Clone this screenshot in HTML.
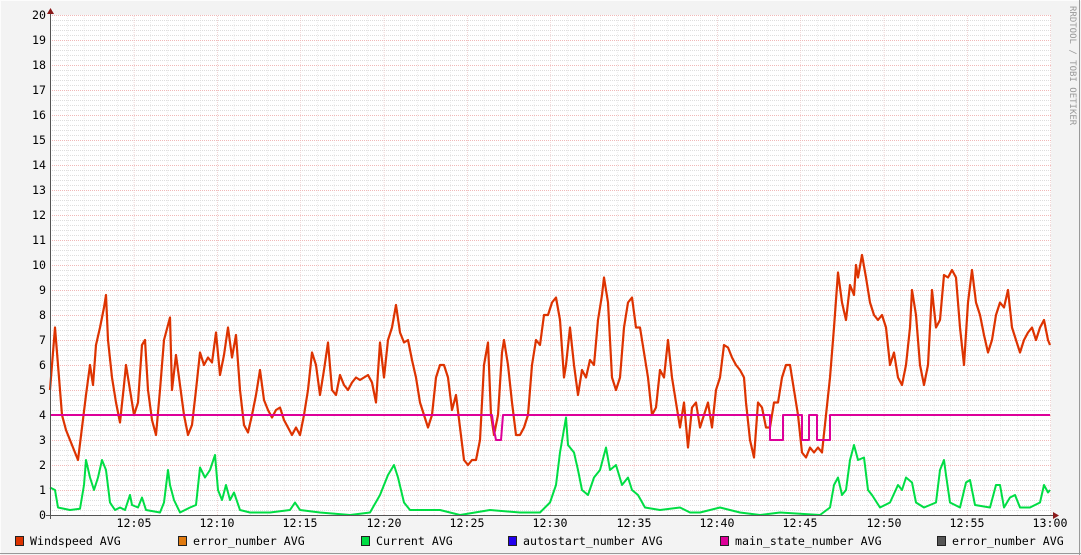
<!DOCTYPE html>
<html><head><meta charset="utf-8"><style>
html,body{margin:0;padding:0;background:#f3f3f3;}
svg{display:block;}
text{font-family:"DejaVu Sans Mono","Liberation Mono",monospace;font-size:11.6px;fill:#000;}
</style></head><body>
<svg width="1081" height="555" viewBox="0 0 1081 555" xmlns="http://www.w3.org/2000/svg">
<defs>
<pattern id="hmin" x="0" y="15" width="1000" height="5" patternUnits="userSpaceOnUse"><line x1="0" y1="0.5" x2="1000" y2="0.5" stroke="#ddd" stroke-width="1" stroke-dasharray="1,1"/></pattern>
<pattern id="vmin" x="50.5" y="0" width="16.6667" height="600" patternUnits="userSpaceOnUse"><line x1="0" y1="0" x2="0" y2="600" stroke="#ddd" stroke-width="1" stroke-dasharray="1,1"/></pattern>
<pattern id="hmaj" x="0" y="15" width="1000" height="25" patternUnits="userSpaceOnUse"><line x1="0" y1="0.5" x2="1000" y2="0.5" stroke="#f0b8b8" stroke-width="1" stroke-dasharray="1,1"/></pattern>
<pattern id="vmaj" x="50.5" y="0" width="83.333" height="600" patternUnits="userSpaceOnUse"><line x1="0" y1="0" x2="0" y2="600" stroke="#f0b8b8" stroke-width="1" stroke-dasharray="1,1"/></pattern>
</defs>
<rect x="0" y="0" width="1081" height="555" fill="#f3f3f3"/>
<line x1="0" y1="0.5" x2="1081" y2="0.5" stroke="#fcfcfc"/>
<line x1="0.5" y1="0" x2="0.5" y2="555" stroke="#fcfcfc"/>
<line x1="0" y1="553.5" x2="1081" y2="553.5" stroke="#999"/>
<line x1="1079.5" y1="0" x2="1079.5" y2="555" stroke="#999"/>
<rect x="50" y="15" width="1001" height="500" fill="#fff"/>
<rect x="51" y="15" width="1000" height="500" fill="url(#hmin)"/>
<rect x="51" y="15" width="1000" height="500" fill="url(#vmin)"/>
<rect x="51" y="15" width="1000" height="500" fill="url(#hmaj)"/>
<rect x="51" y="15" width="1000" height="500" fill="url(#vmaj)"/>
<g text-anchor="end">
<text x="46" y="19">20</text><text x="46" y="44">19</text><text x="46" y="69">18</text><text x="46" y="94">17</text><text x="46" y="119">16</text><text x="46" y="144">15</text><text x="46" y="169">14</text><text x="46" y="194">13</text><text x="46" y="219">12</text><text x="46" y="244">11</text><text x="46" y="269">10</text><text x="46" y="294">9</text><text x="46" y="319">8</text><text x="46" y="344">7</text><text x="46" y="369">6</text><text x="46" y="394">5</text><text x="46" y="419">4</text><text x="46" y="444">3</text><text x="46" y="469">2</text><text x="46" y="494">1</text><text x="46" y="519">0</text>
</g>
<g text-anchor="middle">
<text x="134" y="527">12:05</text><text x="217" y="527">12:10</text><text x="300" y="527">12:15</text><text x="384" y="527">12:20</text><text x="467" y="527">12:25</text><text x="550" y="527">12:30</text><text x="634" y="527">12:35</text><text x="717" y="527">12:40</text><text x="800" y="527">12:45</text><text x="884" y="527">12:50</text><text x="967" y="527">12:55</text><text x="1050" y="527">13:00</text>
</g>
<g transform="translate(0,515) scale(1,-25)" fill="none" stroke-linejoin="round">
<polyline vector-effect="non-scaling-stroke" stroke="#00dd44" stroke-width="2" points="50,1.1 55,1 58,0.3 70,0.2 80,0.25 84,1.2 86,2.2 90,1.5 94,1 98,1.5 102,2.2 106,1.8 110,0.5 115,0.2 120,0.3 125,0.2 130,0.8 132,0.4 138,0.3 142,0.7 146,0.2 160,0.1 164,0.5 168,1.8 170,1.2 174,0.6 180,0.1 190,0.3 196,0.4 200,1.9 205,1.5 210,1.8 215,2.4 218,1 222,0.6 226,1.2 230,0.6 234,0.9 240,0.2 250,0.1 270,0.1 290,0.2 295,0.5 300,0.2 320,0.1 350,0 370,0.1 380,0.8 388,1.6 394,2 398,1.5 404,0.5 410,0.2 440,0.2 460,0 490,0.2 520,0.1 540,0.1 550,0.5 556,1.2 560,2.5 566,3.9 568,2.8 574,2.5 578,1.8 582,1 588,0.8 594,1.5 600,1.8 606,2.7 610,1.8 616,2 622,1.2 628,1.5 632,1 638,0.8 645,0.3 660,0.2 680,0.3 690,0.1 700,0.1 720,0.3 740,0.1 760,0 780,0.1 820,0 830,0.3 834,1.2 838,1.5 842,0.8 846,1 850,2.2 854,2.8 858,2.2 864,2.3 868,1 872,0.8 880,0.3 890,0.5 898,1.2 902,1 906,1.5 912,1.3 916,0.5 924,0.3 936,0.5 940,1.8 944,2.2 946,1.6 950,0.5 960,0.3 966,1.3 970,1.4 975,0.4 990,0.3 996,1.2 1000,1.2 1004,0.3 1010,0.7 1015,0.8 1020,0.3 1030,0.3 1040,0.5 1044,1.2 1048,0.9 1050,1"/>
<polyline vector-effect="non-scaling-stroke" stroke="#dd3300" stroke-width="2.2" points="50,5 55,7.5 58,6 62,4 66,3.4 70,3 75,2.5 78,2.2 82,3.5 86,4.8 90,6 93,5.2 96,6.8 100,7.5 104,8.3 106,8.8 108,7 112,5.5 116,4.5 120,3.7 124,5.2 126,6 130,5 134,4 138,4.5 142,6.8 145,7 148,5 152,3.8 156,3.2 160,5 164,7 170,7.9 172,5 176,6.4 180,5.2 184,4 188,3.2 192,3.6 196,5 200,6.5 204,6 208,6.3 212,6.1 216,7.3 220,5.6 224,6.4 228,7.5 232,6.3 236,7.2 240,5 244,3.6 248,3.3 252,4 256,4.8 260,5.8 264,4.6 268,4.2 272,3.9 276,4.2 280,4.3 284,3.8 288,3.5 292,3.2 296,3.5 300,3.2 304,4 308,5 312,6.5 316,6 320,4.8 324,5.8 328,6.9 332,5 336,4.8 340,5.6 344,5.2 348,5 352,5.3 356,5.5 360,5.4 364,5.5 368,5.6 372,5.3 376,4.5 380,6.9 384,5.5 388,7 392,7.5 396,8.4 400,7.3 404,6.9 408,7 412,6.2 416,5.5 420,4.5 424,4 428,3.5 432,4 436,5.5 440,6 444,6 448,5.5 452,4.2 456,4.8 460,3.5 464,2.2 468,2 472,2.2 476,2.2 480,3 484,6 488,6.9 491,4 494,3.2 498,4 502,6.5 504,7 508,6 512,4.5 516,3.2 520,3.2 524,3.5 528,4 532,6 536,7 540,6.8 544,8 548,8 552,8.5 556,8.7 560,7.8 564,5.5 566,6 570,7.5 574,6 578,4.8 582,5.8 586,5.5 590,6.2 594,6 598,7.8 602,8.8 604,9.5 608,8.5 612,5.5 616,5 620,5.5 624,7.5 628,8.5 632,8.7 636,7.5 640,7.5 644,6.5 648,5.5 652,4 656,4.3 660,5.8 664,5.5 668,7 672,5.5 676,4.5 680,3.5 684,4.5 688,2.7 692,4.3 696,4.5 700,3.5 704,4 708,4.5 712,3.5 716,5 720,5.5 724,6.8 728,6.7 732,6.3 736,6 740,5.8 744,5.5 746,4.5 750,3 754,2.3 758,4.5 762,4.3 766,3.5 770,3.5 774,4.5 778,4.5 782,5.5 786,6 790,6 794,5 798,4 802,2.5 806,2.3 810,2.7 814,2.5 818,2.7 822,2.5 826,4 830,5.5 834,7.5 838,9.7 842,8.5 846,7.8 850,9.2 854,8.8 856,10 858,9.5 862,10.4 866,9.5 870,8.5 874,8 878,7.8 882,8 886,7.5 890,6 894,6.5 898,5.5 902,5.2 906,6 910,7.5 912,9 916,8 920,6 924,5.2 928,6 932,9 936,7.5 940,7.8 944,9.6 948,9.5 952,9.8 956,9.5 960,7.5 964,6 968,8.5 972,9.8 976,8.5 980,8 984,7.2 988,6.5 992,7 996,8 1000,8.5 1004,8.3 1008,9 1012,7.5 1016,7 1020,6.5 1024,7 1028,7.3 1032,7.5 1036,7 1040,7.5 1044,7.8 1048,7 1050,6.8"/>
<polyline vector-effect="non-scaling-stroke" stroke="#dd0099" stroke-width="2" points="50,4 492,4 494,3.4 496,3 501,3 503,4 770,4 770,3 783,3 783,4 802,4 802,3 809,3 809,4 817,4 817,3 830,3 830,4 1050,4"/>
</g>
<line x1="50.5" y1="10" x2="50.5" y2="519" stroke="#555" stroke-width="1"/>
<line x1="46" y1="515.5" x2="1054" y2="515.5" stroke="#555" stroke-width="1"/>
<polygon points="47,14 54,14 50.5,8" fill="#8b1a1a"/>
<polygon points="1053,512 1053,519 1059,515.5" fill="#8b1a1a"/>
<g>
<rect x="15.5" y="536.5" width="8" height="9" fill="#dd3300" stroke="#222"/><text x="30" y="545">Windspeed AVG</text>
<rect x="178.5" y="536.5" width="8" height="9" fill="#e07a10" stroke="#222"/><text x="193" y="545">error_number AVG</text>
<rect x="361.5" y="536.5" width="8" height="9" fill="#00dd44" stroke="#222"/><text x="376" y="545">Current AVG</text>
<rect x="508.5" y="536.5" width="8" height="9" fill="#2200ee" stroke="#222"/><text x="523" y="545">autostart_number AVG</text>
<rect x="720.5" y="536.5" width="8" height="9" fill="#dd0099" stroke="#222"/><text x="735" y="545">main_state_number AVG</text>
<rect x="937.5" y="536.5" width="8" height="9" fill="#555" stroke="#222"/><text x="952" y="545">error_number AVG</text>
</g>
<text transform="translate(1070,6) rotate(90)" style="font-size:9px;fill:#999">RRDTOOL / TOBI OETIKER</text>
</svg>
</body></html>
